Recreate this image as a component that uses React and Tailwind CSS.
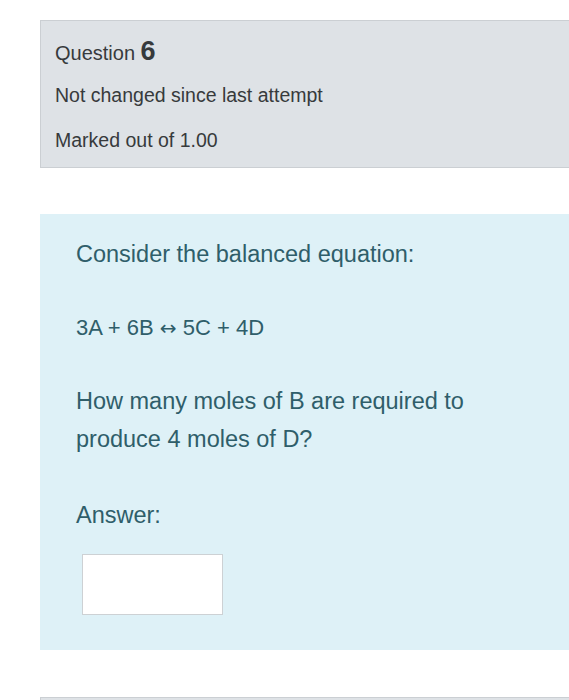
export default function App() {
  return (
    <div className="h-[700px] bg-white pt-5 pl-10 overflow-hidden" style={{ fontFamily: '"Liberation Sans", Arial, sans-serif' }}>
      <div className="bg-[#dee2e6] border border-r-0 border-[#cbcfd3] px-[14px] pt-[15px] pb-[14px] text-[#373a3c]">
        <h3 className="text-[20px] leading-[30px] font-normal">
          Question <span className="text-[27px] font-bold">6</span>
        </h3>
        <div className="text-[19.5px] leading-[26px] mt-[14px]">Not changed since last attempt</div>
        <div className="text-[19.5px] leading-[26px] mt-[19px]">Marked out of 1.00</div>
      </div>

      <div className="mt-[46px] bg-[#def1f7] pl-9 pr-4 pt-[22px] h-[436px] text-[#2f5e6a]">
        <p className="text-[23.5px] leading-[36px]">Consider the balanced equation:</p>
        <p className="text-[22px] leading-[36px] mt-[38px]">
          3A + 6B{' '}
          <span className="text-[20px]" style={{ fontFamily: '"DejaVu Sans", sans-serif' }}>↔</span>{' '}
          5C + 4D
        </p>
        <p className="text-[23.5px] leading-[38px] mt-[36px]">
          How many moles of B are required to
          <br />
          produce 4 moles of D?
        </p>
        <p className="text-[23.5px] leading-[36px] mt-[39px]">Answer:</p>
        <input type="text" className="mt-[21px] ml-[6px] block w-[141px] h-[61px] bg-white border border-[#cdd1d4] outline-none" />
      </div>

      <div className="mt-[47px] h-10 bg-[#dee2e6] border-t border-l border-[#cbcfd3]" />
    </div>
  );
}
